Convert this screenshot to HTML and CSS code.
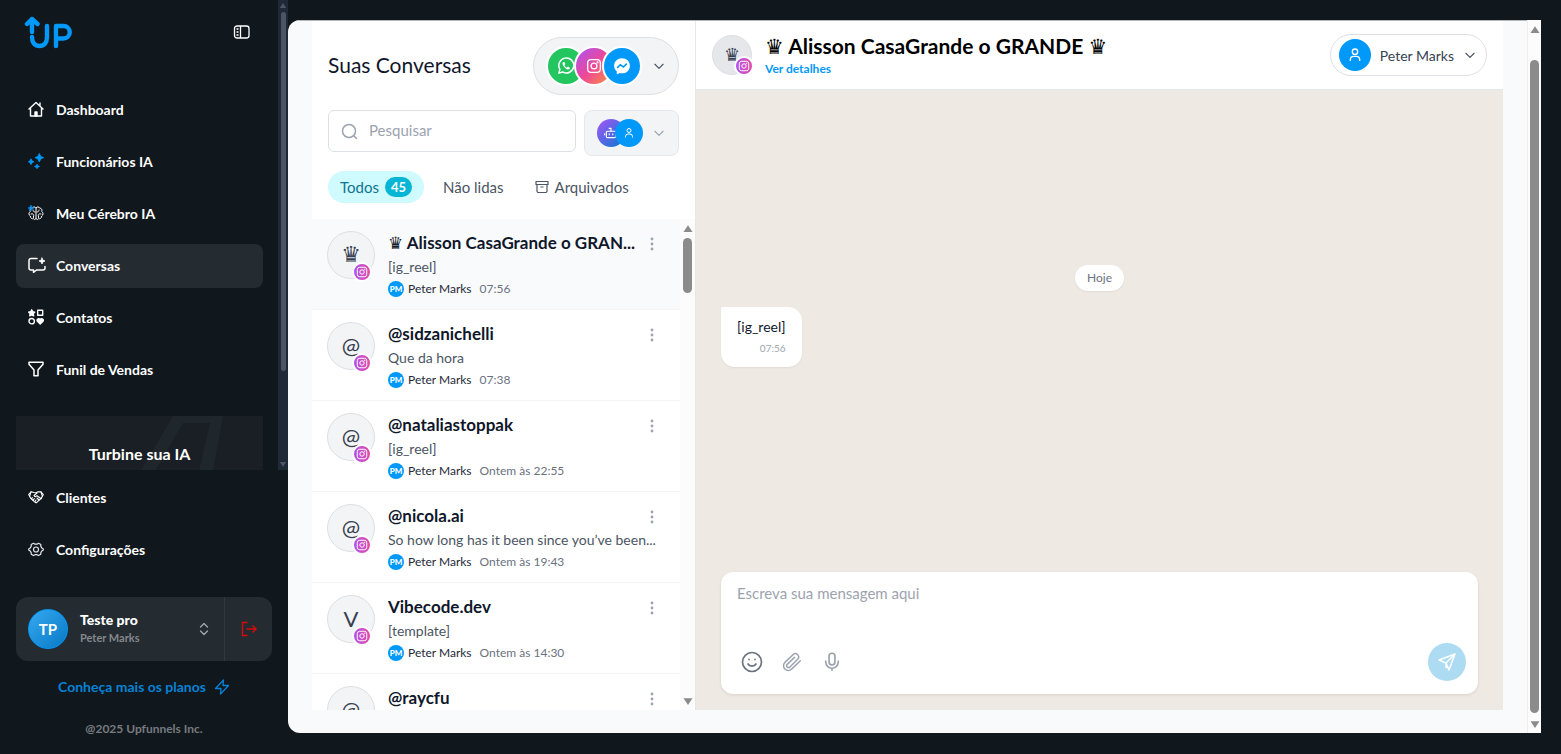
FILE: index.html
```html
<!DOCTYPE html>
<html lang="pt-BR">
<head>
  <meta charset="UTF-8">
  <meta name="viewport" content="width=device-width, initial-scale=1">
  <title>Conversas | UP</title>
  <link rel="stylesheet" href="styles.css">
</head>
<body>

  <!-- Shared icons -->
  <svg class="sprite" aria-hidden="true">
    <symbol id="instagram" viewBox="0 0 24 24">
      <rect x="2.5" y="2.5" width="19" height="19" rx="5"/>
      <circle cx="12" cy="12" r="4.4"/>
      <circle cx="17.3" cy="6.7" r=".7"/>
    </symbol>
    <symbol id="person" viewBox="0 0 24 24">
      <circle cx="12" cy="7" r="4"/>
      <path d="M5 21v-2a5 5 0 0 1 5-5h4a5 5 0 0 1 5 5v2"/>
    </symbol>
    <symbol id="chevron" viewBox="0 0 24 24"><path d="M5 9l7 7 7-7"/></symbol>
    <symbol id="dots" viewBox="0 0 4 14">
      <circle cx="2" cy="2" r="1.4"/><circle cx="2" cy="7" r="1.4"/><circle cx="2" cy="12" r="1.4"/>
    </symbol>
    <symbol id="up" viewBox="0 0 10 8"><path d="M5 1l4 6H1z"/></symbol>
    <symbol id="down" viewBox="0 0 10 8"><path d="M5 7L1 1h8z"/></symbol>
  </svg>

  <aside class="sidebar">
    <div class="sidebar-top">
      <div class="sidebar-scroll">
        <header class="brand">
          <a href="#" class="logo" aria-label="UP">
            <svg viewBox="0 0 48 34" width="48" height="34" fill="none" stroke="#0099fa" stroke-width="4.4" stroke-linecap="round" stroke-linejoin="round">
              <path d="M8 17V4M3 9L8 4l5.500 5"/>
              <path d="M8 22c0 6 3 9 7.500 9S23 28 23 22V11"/>
              <path d="M32 31V11h7.500a6 6 0 0 1 0 12.500H32"/>
            </svg>
          </a>
          <button class="icon-button" aria-label="Recolher menu">
            <svg viewBox="0 0 18 14" width="18" height="14" fill="none" stroke="#fff" stroke-width="1.300">
              <rect x="1.500" y="1" width="14.500" height="12" rx="2.500"/>
              <path d="M7.500 1v12M3.500 4h2M3.500 7h2M3.500 10h2"/>
            </svg>
          </button>
        </header>

        <nav class="menu">
          <a href="#" class="menu-item">
            <svg viewBox="0 0 16 16" fill="none" stroke="#fff" stroke-width="1.400" stroke-linecap="round" stroke-linejoin="round">
              <path d="M1 8l7-6.500L15 8M2.500 7v8h11V7M12 4.500V2"/>
              <path d="M7 15v-4h2v4z" fill="#fff"/>
            </svg>
            Dashboard
          </a>
          <a href="#" class="menu-item">
            <svg viewBox="0 0 16 16" fill="#0099fa" stroke="#0099fa" stroke-width=".8" stroke-linejoin="round">
              <path d="M11.300 .4l1.500 3 2.800 1.200-2.800 1.400-1.500 3L9.900 6 7 4.600l2.900-1.200zM3 5.800l1 2 1.900.9-1.900 1L3 11.600l-1-1.900-1.600-1 1.600-.9zM9 11.200l.8 1.500 1.600.8-1.600.8L9 15.700l-.8-1.400-1.600-.8 1.600-.8z"/>
            </svg>
            Funcionários IA
          </a>
          <a href="#" class="menu-item">
            <svg viewBox="0 0 16 16" fill="none" stroke="#fff" stroke-width="1" stroke-linecap="round">
              <path d="M8 3C7 1.500 5 1.500 4.500 3 2.500 3 1.500 5 2.300 6.500.5 7.500.5 10 2.300 11c0 2 1.700 3.200 3.200 2.700C6.300 15 7.500 14.500 8 13.500c.5 1 1.700 1.500 2.500.2 1.500.5 3.200-.7 3.200-2.700 1.800-1 1.800-3.500 0-4.500C14.500 5 13.500 3 11.500 3 11 1.500 9 1.500 8 3v10.500"/>
              <path d="M5 5c0 1.500 1 2 2 2M3 9c1.500-.6 2.500 0 2.800 1.200M11 5c0 1.500-1 2-2 2M13 9c-1.500-.6-2.500 0-2.800 1.200M5.500 12.500V11M10.500 12.500V11"/>
              <path d="M3 0l.9 2.100L6 3l-2.100.9L3 6l-.9-2.100L0 3l2.100-.9z" fill="#0099fa" stroke="#0099fa" stroke-width=".5"/>
            </svg>
            Meu Cérebro IA
          </a>
          <a href="#" class="menu-item active">
            <svg viewBox="0 0 18 16" class="wide" fill="none" stroke="#fff" stroke-width="1.500" stroke-linecap="round" stroke-linejoin="round">
              <path d="M9 1.500H3a2 2 0 0 0-2 2V11a2 2 0 0 0 2 2h2.500v2.300L8.500 13H15a2 2 0 0 0 2-2V9.500"/>
              <path d="M14 1l.9 2.100 2.100.9-2.100.9L14 7l-.9-2.100L11 4l2.100-.9z" fill="#fff" stroke-width=".8"/>
            </svg>
            Conversas
          </a>
          <a href="#" class="menu-item">
            <svg viewBox="0 0 16 16" fill="none" stroke="#fff" stroke-width="1.400" stroke-linejoin="round">
              <path d="M3.700.8l1 2 2.100.3-1.500 1.500.3 2.200-1.900-1-1.900 1 .3-2.200L.6 3.100l2.100-.3z" fill="#fff"/>
              <path d="M9.700 1.200h5v5h-5z"/>
              <circle cx="3.700" cy="12.200" r="2.700"/>
              <path d="M12.200 15L9.400 12.200c-1.200-1.700 1.300-3.600 2.800-1.700 1.500-1.900 4 0 2.800 1.700z" fill="#fff"/>
            </svg>
            Contatos
          </a>
          <a href="#" class="menu-item">
            <svg viewBox="0 0 16 16" fill="none" stroke="#fff" stroke-width="1.500" stroke-linejoin="round">
              <path d="M1 1.300h14v1.900L10 9v5.700H6V9L1 3.200z"/>
            </svg>
            Funil de Vendas
          </a>
        </nav>

        <div class="boost">
          <svg class="boost-mark" viewBox="0 0 82 55" width="82" height="55" fill="#1f262c">
            <path d="M32 0h50L72 55H58L69 7H42L14 55H0z"/>
          </svg>
          <strong>Turbine sua IA</strong>
        </div>
      </div>

      <div class="scrollbar scrollbar-dark">
        <svg viewBox="0 0 10 8"><use href="#up"/></svg>
        <div class="track"><div class="thumb"></div></div>
        <svg viewBox="0 0 10 8"><use href="#down"/></svg>
      </div>
    </div>

    <div class="sidebar-bottom">
      <nav class="menu">
        <a href="#" class="menu-item">
          <svg viewBox="0 0 16 16" fill="none" stroke="#fff" stroke-width="1.100" stroke-linecap="round" stroke-linejoin="round">
            <path d="M.7 5.500L3 2.800l3 .7 2 .2 2-.9 3 .1 2.300 2.600L13.500 9 9 13.200c-.8.6-1.500.5-2 0L2.500 9z"/>
            <path d="M9 4L6 6.500c.5 1.500 2 1.300 3 .2l4.300 3M3 2.800L1.700 7M13 3l1.300 4M4.300 8.500L3.500 10M6.300 9.500L5 11.500M8 11l-1 1.500M9 9l2 2"/>
          </svg>
          Clientes
        </a>
        <a href="#" class="menu-item">
          <svg viewBox="0 0 16 16" fill="none" stroke="#e5e7eb" stroke-width="1.200" stroke-linejoin="round">
            <path d="M5.500 2.300L7 3.200h2l1.500-.9 2.300 1.300v1.800l1 1.500 1.500 1v1.200l-1.500.9-1 1.600v1.700l-2.300 1.300L9 13.700H7l-1.500.9-2.300-1.300v-1.700l-1-1.600-1.500-.9V7.900l1.500-1 1-1.500V3.600z"/>
            <circle cx="8" cy="8.500" r="2.500"/>
          </svg>
          Configurações
        </a>
      </nav>

      <div class="account">
        <button class="account-main">
          <span class="account-avatar">TP</span>
          <span class="account-text">
            <strong>Teste pro</strong>
            <small>Peter Marks</small>
          </span>
          <svg viewBox="0 0 10 14" width="10" height="14" fill="none" stroke="#a3a8ad" stroke-width="1.300" stroke-linecap="round" stroke-linejoin="round">
            <path d="M1.500 5L5 1.500 8.500 5M1.500 9L5 12.500 8.500 9"/>
          </svg>
        </button>
        <button class="logout" aria-label="Sair">
          <svg viewBox="0 0 16 16" width="16" height="16" fill="none" stroke="#d90b0b" stroke-width="1.400">
            <path d="M6.500 1.500h-5v13h5M5.500 8H15M11.500 4.500L15 8l-3.500 3.500"/>
          </svg>
        </button>
      </div>

      <a href="#" class="plans">
        Conheça mais os planos
        <svg viewBox="0 0 16 16" width="16" height="16" fill="none" stroke="#0683d6" stroke-width="1.300" stroke-linejoin="round">
          <path d="M9.500 1L1.500 9.500H7L6.500 15l8-8.500H9z"/>
        </svg>
      </a>
      <p class="copyright">@2025 Upfunnels Inc.</p>
    </div>
  </aside>

  <main class="main">
    <div class="workspace">

      <!-- Conversation list -->
      <section class="inbox">
        <div class="inbox-head">
          <div class="inbox-row">
            <h1>Suas Conversas</h1>
            <button class="channels" aria-label="Canais">
              <span class="bubbles">
                <span class="channel whatsapp">
                  <svg viewBox="0 0 24 24" width="18" height="18" fill="none" stroke="#fff" stroke-width="2" stroke-linejoin="round">
                    <path d="M2.500 21.500l1.400-5A10 10 0 1 1 7.500 20z"/>
                    <path d="M8.500 6.500c-2 1-1.500 4 1.300 7s6 4.200 7.500 1.800l-.4-1.300-2.400-1.200-1.300 1.300c-1.500-.5-2.500-1.500-3.200-3L11 9.700 10 6.800z" fill="#fff" stroke="none"/>
                  </svg>
                </span>
                <span class="channel instagram">
                  <svg width="16" height="16" fill="none" stroke="#fff" stroke-width="2"><use href="#instagram"/></svg>
                </span>
                <span class="channel messenger">
                  <svg viewBox="0 0 24 24" width="18" height="18" fill="#fff">
                    <path d="M12 1.500C6 1.500 1.500 5.800 1.500 11.500c0 3.200 1.300 5.800 3.500 7.600v3.200c0 .6.500.8 1 .6l2.800-1.500c1 .3 2 .4 3.200.4 6 0 10.500-4.500 10.500-10.300S18 1.500 12 1.500z"/>
                    <path d="M5.500 14.500l4.300-4.200 4 3 4.700-4.500" fill="none" stroke="#0099fa" stroke-width="2.200"/>
                  </svg>
                </span>
              </span>
              <svg class="chevron" width="14" height="14"><use href="#chevron"/></svg>
            </button>
          </div>

          <div class="inbox-row search-row">
            <label class="search">
              <svg viewBox="0 0 18 18" width="18" height="18" fill="none" stroke="#9ca3af" stroke-width="1.500" stroke-linecap="round">
                <circle cx="8" cy="9" r="6.500"/><path d="M13 14l2.500 2.500"/>
              </svg>
              <input type="search" placeholder="Pesquisar" aria-label="Pesquisar">
            </label>
            <button class="agents" aria-label="Atendentes">
              <span class="bubbles">
                <span class="agent bot">
                  <svg viewBox="0 0 24 24" width="14" height="14" fill="none" stroke="#fff" stroke-width="2" stroke-linejoin="round">
                    <rect x="4" y="9" width="16" height="11" rx="2"/><path d="M1 13v3M23 13v3M12 9V4H8M9 13v3M15 13v3"/>
                  </svg>
                </span>
                <span class="agent human">
                  <svg width="12" height="12" fill="none" stroke="#fff" stroke-width="2"><use href="#person"/></svg>
                </span>
              </span>
              <svg class="chevron light" width="14" height="14"><use href="#chevron"/></svg>
            </button>
          </div>

          <div class="tabs">
            <button class="tab selected">Todos <span class="count">45</span></button>
            <button class="tab">Não lidas</button>
            <button class="tab">
              <svg viewBox="0 0 14 14" width="14" height="14" fill="none" stroke="#4b5563" stroke-width="1.200" stroke-linejoin="round">
                <path d="M1 1.500h12v3H1zM2 4.500v6.500a1.500 1.500 0 0 0 1.500 1.500h7A1.500 1.500 0 0 0 12 11V4.500M5.500 7h3"/>
              </svg>
              Arquivados
            </button>
          </div>
        </div>

        <div class="inbox-body">
          <ul class="threads">
            <li class="thread current">
              <div class="avatar"><span class="crown">♛</span>
                <span class="badge"><svg width="12" height="12"><use href="#instagram"/></svg></span>
              </div>
              <div class="thread-text">
                <h2><span class="crown">♛</span> Alisson CasaGrande o GRAN...</h2>
                <p>[ig_reel]</p>
                <div class="meta"><span class="pm">PM</span><span>Peter Marks</span><time>07:56</time></div>
              </div>
              <button class="more" aria-label="Opções"><svg width="4" height="14"><use href="#dots"/></svg></button>
            </li>
            <li class="thread">
              <div class="avatar">@
                <span class="badge"><svg width="12" height="12"><use href="#instagram"/></svg></span>
              </div>
              <div class="thread-text">
                <h2>@sidzanichelli</h2>
                <p>Que da hora</p>
                <div class="meta"><span class="pm">PM</span><span>Peter Marks</span><time>07:38</time></div>
              </div>
              <button class="more" aria-label="Opções"><svg width="4" height="14"><use href="#dots"/></svg></button>
            </li>
            <li class="thread">
              <div class="avatar">@
                <span class="badge"><svg width="12" height="12"><use href="#instagram"/></svg></span>
              </div>
              <div class="thread-text">
                <h2>@nataliastoppak</h2>
                <p>[ig_reel]</p>
                <div class="meta"><span class="pm">PM</span><span>Peter Marks</span><time>Ontem às 22:55</time></div>
              </div>
              <button class="more" aria-label="Opções"><svg width="4" height="14"><use href="#dots"/></svg></button>
            </li>
            <li class="thread">
              <div class="avatar">@
                <span class="badge"><svg width="12" height="12"><use href="#instagram"/></svg></span>
              </div>
              <div class="thread-text">
                <h2>@nicola.ai</h2>
                <p>So how long has it been since you’ve been...</p>
                <div class="meta"><span class="pm">PM</span><span>Peter Marks</span><time>Ontem às 19:43</time></div>
              </div>
              <button class="more" aria-label="Opções"><svg width="4" height="14"><use href="#dots"/></svg></button>
            </li>
            <li class="thread">
              <div class="avatar">V
                <span class="badge"><svg width="12" height="12"><use href="#instagram"/></svg></span>
              </div>
              <div class="thread-text">
                <h2>Vibecode.dev</h2>
                <p>[template]</p>
                <div class="meta"><span class="pm">PM</span><span>Peter Marks</span><time>Ontem às 14:30</time></div>
              </div>
              <button class="more" aria-label="Opções"><svg width="4" height="14"><use href="#dots"/></svg></button>
            </li>
            <li class="thread">
              <div class="avatar">@</div>
              <div class="thread-text">
                <h2>@raycfu</h2>
              </div>
              <button class="more" aria-label="Opções"><svg width="4" height="14"><use href="#dots"/></svg></button>
            </li>
          </ul>
          <div class="scrollbar scrollbar-list">
            <svg viewBox="0 0 10 8"><use href="#up"/></svg>
            <div class="track"><div class="thumb"></div></div>
            <svg viewBox="0 0 10 8"><use href="#down"/></svg>
          </div>
        </div>
      </section>

      <!-- Open conversation -->
      <section class="chat">
        <header class="chat-head">
          <div class="avatar small"><span class="crown">♛</span>
            <span class="badge"><svg width="12" height="12"><use href="#instagram"/></svg></span>
          </div>
          <div class="chat-title">
            <h2><span class="crown">♛</span> Alisson CasaGrande o GRANDE <span class="crown">♛</span></h2>
            <a href="#">Ver detalhes</a>
          </div>
          <button class="assignee">
            <span class="assignee-icon">
              <svg width="16" height="16" fill="none" stroke="#fff" stroke-width="2"><use href="#person"/></svg>
            </span>
            Peter Marks
            <svg class="chevron" width="14" height="14"><use href="#chevron"/></svg>
          </button>
        </header>

        <div class="messages">
          <span class="day">Hoje</span>
          <div class="message">
            <p>[ig_reel]</p>
            <time>07:56</time>
          </div>
        </div>

        <form class="composer">
          <textarea placeholder="Escreva sua mensagem aqui" aria-label="Mensagem" rows="2"></textarea>
          <div class="composer-actions">
            <button type="button" class="icon-button dark" aria-label="Emoji">
              <svg viewBox="0 0 24 24" width="24" height="24" fill="none" stroke="currentColor" stroke-width="1.700" stroke-linecap="round">
                <circle cx="12" cy="12" r="9.500"/><path d="M8 14c1.500 2.700 6.500 2.700 8 0M9 9.300v.2M15 9.300v.2"/>
              </svg>
            </button>
            <button type="button" class="icon-button" aria-label="Anexar">
              <svg viewBox="0 0 24 24" width="20" height="20" fill="none" stroke="currentColor" stroke-width="1.800" stroke-linecap="round" stroke-linejoin="round">
                <path d="M22 10.500L11.500 20.500a5.500 5.500 0 0 1-8-8L13.500 3a3.900 3.900 0 0 1 5.500 5.500L9.500 18a2.200 2.200 0 0 1-3.200-3.200L15 6.500"/>
              </svg>
            </button>
            <button type="button" class="icon-button" aria-label="Gravar áudio">
              <svg viewBox="0 0 24 24" width="20" height="20" fill="none" stroke="currentColor" stroke-width="2" stroke-linecap="round">
                <rect x="8.500" y="1.500" width="7" height="14" rx="3.500"/><path d="M4.500 11v1a7.500 7.500 0 0 0 15 0v-1M12 19.500V22"/>
              </svg>
            </button>
            <button class="send" aria-label="Enviar">
              <svg viewBox="0 0 20 20" width="20" height="20" fill="none" stroke="#fff" stroke-width="1.500" stroke-linejoin="round">
                <path d="M18 2L2 8l7 3 3 7zM9 11l9-9M9 11v4.500l2-1.500"/>
              </svg>
            </button>
          </div>
        </form>
      </section>
    </div>

    <div class="scrollbar scrollbar-page">
      <svg viewBox="0 0 10 8"><use href="#up"/></svg>
      <div class="track"><div class="thumb"></div></div>
      <svg viewBox="0 0 10 8"><use href="#down"/></svg>
    </div>
  </main>

</body>
</html>
```
FILE: styles.css
```css
* {
  box-sizing: border-box;
}

body {
  display: flex;
  height: 100vh;
  margin: 0;
  overflow: hidden;
  background: #10171d;
  color: #0f172a;
  font-family: Lato, "DejaVu Sans", sans-serif;
  font-size: 15px;
}

h1, h2, p, ul {
  margin: 0;
  padding: 0;
}

a {
  color: inherit;
  text-decoration: none;
}

button, input, textarea {
  padding: 0;
  border: none;
  background: none;
  color: inherit;
  font: inherit;
}

button {
  cursor: pointer;
}

svg {
  display: block;
  flex-shrink: 0;
}

.sprite {
  position: absolute;
  width: 0;
  height: 0;
}

/* Sidebar */
.sidebar {
  display: flex;
  flex-direction: column;
  flex-shrink: 0;
  width: 288px;
  color: #fff;
}

.sidebar-top {
  display: flex;
  flex: 1;
  min-height: 0;
}

.sidebar-scroll {
  flex: 1;
  padding: 0 15px 0 16px;
  overflow: hidden;
}

.brand {
  display: flex;
  align-items: center;
  justify-content: space-between;
  height: 64px;
  margin-bottom: 24px;
  padding: 0 9px 0 8px;
}

.menu {
  display: flex;
  flex-direction: column;
  gap: 8px;
}

.menu-item {
  display: flex;
  align-items: center;
  gap: 12px;
  height: 44px;
  padding: 0 12px 2px;
  border-radius: 8px;
  font-size: 14px;
  font-weight: 700;
}

.menu-item svg {
  width: 16px;
  height: 16px;
}

.menu-item .wide {
  width: 18px;
  margin-right: -2px;
}

.menu-item.active {
  background: #242b31;
}

.boost {
  position: relative;
  height: 96px;
  margin-top: 24px;
  padding-top: 28px;
  background: #191f25;
  font-size: 16px;
  line-height: 20px;
  text-align: center;
}

.boost-mark {
  position: absolute;
  top: 0;
  right: 40px;
}

.boost strong {
  position: relative;
}

.sidebar-bottom {
  display: flex;
  flex-direction: column;
  padding: 6px 16px 17px;
}

.account {
  display: flex;
  height: 64px;
  margin-top: 25px;
  border-radius: 12px;
  background: #242b31;
}

.account-main {
  display: flex;
  flex: 1;
  align-items: center;
  gap: 12px;
  padding: 0 15px 0 12px;
  text-align: left;
}

.account-avatar {
  display: flex;
  align-items: center;
  justify-content: center;
  width: 40px;
  height: 40px;
  border: 1px solid #0099fa;
  border-radius: 50%;
  background: linear-gradient(135deg, #36a9f2, #0878c4);
  font-weight: 700;
}

.account-text {
  display: flex;
  flex: 1;
  flex-direction: column;
  line-height: 18px;
}

.account-text strong {
  font-size: 14px;
  font-weight: 900;
}

.account-text small {
  color: #84888c;
  font-size: 11px;
  font-weight: 700;
}

.logout {
  display: flex;
  align-items: center;
  justify-content: center;
  width: 48px;
  border-left: 1px solid #31383e;
}

.plans {
  display: flex;
  align-items: center;
  justify-content: center;
  gap: 8px;
  margin-top: 16px;
  color: #0683d6;
  font-size: 14px;
  font-weight: 700;
  line-height: 20px;
}

.copyright {
  margin-top: 24px;
  color: #777b7f;
  font-size: 12px;
  font-weight: 700;
  line-height: 16px;
  text-align: center;
}

/* Scrollbars */
.scrollbar {
  display: flex;
  flex-direction: column;
  flex-shrink: 0;
  align-items: center;
  width: 14px;
  padding: 5px 0 4px;
  background: #fcfcfc;
}

.scrollbar svg {
  width: 12px;
  height: 9px;
  fill: #8b8b8b;
}

.track {
  flex: 1;
  width: 9px;
  padding-top: 5px;
}

.thumb {
  border-radius: 5px;
  background: #8b8b8b;
}

.scrollbar-dark {
  width: 10px;
  padding: 2px 0;
  background: #1f2937;
}

.scrollbar-dark svg {
  width: 8px;
  height: 7px;
  fill: #4b5563;
}

.scrollbar-dark .track {
  width: 5px;
  padding-top: 3px;
}

.scrollbar-dark .thumb {
  height: 80%;
  background: #4b5563;
}

.scrollbar-list .thumb {
  height: 55px;
}

.scrollbar-page {
  border-left: 1px solid #efeee8;
}

.scrollbar-page .track {
  padding-top: 26px;
}

.scrollbar-page .thumb {
  height: 99%;
}

/* Main area */
.main {
  display: flex;
  flex: 1;
  min-width: 0;
  margin: 20px 20px 21px 0;
  overflow: hidden;
  border-radius: 12px 0 0 12px;
  background: #f9fafb;
}

.workspace {
  display: flex;
  flex: 1;
  min-width: 0;
  padding: 0 24px 23px;
  border-top: 1px solid #b5b8bb;
}

/* Inbox */
.inbox {
  display: flex;
  flex-direction: column;
  flex-shrink: 0;
  width: 384px;
  border-right: 1px solid #e5e7eb;
  background: #fff;
}

.inbox-head {
  display: flex;
  flex-direction: column;
  gap: 15px;
  padding: 16px;
}

.inbox-row {
  display: flex;
  align-items: center;
  justify-content: space-between;
  gap: 8px;
}

.inbox-row h1 {
  padding-bottom: 4px;
  font-size: 21px;
  font-weight: 400;
}

.search-row {
  align-items: flex-start;
}

.channels {
  display: flex;
  align-items: center;
  gap: 10px;
  height: 58px;
  padding: 0 12px;
  border: 1px solid #dcdfe4;
  border-radius: 29px;
  background: #f3f4f6;
}

.bubbles {
  display: flex;
}

.channel {
  display: flex;
  align-items: center;
  justify-content: center;
  width: 40px;
  height: 40px;
  margin-left: -12px;
  border: 2px solid #fff;
  border-radius: 50%;
}

.channel:first-child {
  margin-left: 0;
}

.whatsapp {
  background: #22c55e;
}

.instagram {
  background: linear-gradient(135deg, #a855f7, #ec4899 50%, #fb923c);
}

.messenger,
.human {
  background: #0099fa;
}

.chevron {
  fill: none;
  stroke: #4b5563;
  stroke-width: 2;
  stroke-linecap: round;
  stroke-linejoin: round;
}

.chevron.light {
  stroke: #9ca3af;
}

.search {
  display: flex;
  flex: 1;
  align-items: center;
  gap: 10px;
  min-width: 0;
  height: 42px;
  padding: 0 12px;
  border: 1px solid #dcdfe4;
  border-radius: 6px;
}

.search input {
  width: 100%;
  min-width: 0;
  padding-bottom: 2px;
  outline: none;
}

.search input::placeholder,
.composer textarea::placeholder {
  color: #9ca3af;
  opacity: 1;
}

.agents {
  display: flex;
  align-items: center;
  gap: 9px;
  height: 46px;
  padding: 0 12px;
  border: 1px solid #e5e7eb;
  border-radius: 8px;
  background: #f3f4f6;
}

.agent {
  display: flex;
  align-items: center;
  justify-content: center;
  width: 28px;
  height: 28px;
  border-radius: 50%;
}

.bot {
  background: linear-gradient(135deg, #a855f7, #0878d0);
}

.human {
  margin-left: -10px;
}

.tabs {
  display: flex;
  gap: 7px;
}

.tab {
  display: flex;
  align-items: center;
  gap: 6px;
  height: 32px;
  padding: 0 12px 1px;
  border-radius: 16px;
  color: #4b5563;
}

.tab.selected {
  background: #cffafe;
  color: #0e7490;
}

.count {
  padding: 0 6px;
  border-radius: 10px;
  background: #06b6d4;
  color: #fff;
  font-size: 13px;
  font-weight: 700;
  line-height: 20px;
}

.inbox-body {
  display: flex;
  flex: 1;
  min-height: 0;
}

.scrollbar-list {
  width: 15px;
}

.threads {
  flex: 1;
  min-width: 0;
  overflow: hidden;
  list-style: none;
}

.thread {
  display: flex;
  align-items: flex-start;
  height: 91px;
  padding: 12px 16px 10px 15px;
  border-bottom: 1px solid #f3f4f6;
}

.thread.current {
  background: #f9fafb;
}

.avatar {
  position: relative;
  display: flex;
  flex-shrink: 0;
  align-items: center;
  justify-content: center;
  width: 48px;
  height: 48px;
  margin-right: 13px;
  border: 1px solid #dcdfe4;
  border-radius: 50%;
  background: #f3f4f6;
  color: #374151;
  font-size: 22px;
  line-height: 24px;
}

.avatar.small {
  width: 40px;
  height: 40px;
  background: #e5e7eb;
  font-size: 18px;
}

.crown {
  font-family: "DejaVu Sans", sans-serif;
  font-weight: 700;
}

.badge {
  position: absolute;
  right: 2px;
  bottom: -4px;
  padding: 2px;
  border: 2px solid #fff;
  border-radius: 50%;
  background: linear-gradient(90deg, #a855f7, #ec4899) border-box;
}

.small .badge {
  right: -3px;
  bottom: -2px;
}

.badge svg {
  fill: none;
  stroke: #fff;
  stroke-width: 2;
}

.thread-text {
  flex: 1;
  min-width: 0;
}

.thread h2 {
  font-size: 17px;
  font-weight: 700;
  line-height: 24px;
  white-space: nowrap;
}

.thread p {
  color: #4b5563;
  font-size: 14px;
  line-height: 24px;
  white-space: nowrap;
}

.meta {
  display: flex;
  align-items: center;
  gap: 4px;
  color: #1f2937;
  font-size: 12px;
  line-height: 20px;
}

.meta time {
  margin-left: 4px;
  color: #6b7280;
}

.pm {
  width: 16px;
  height: 16px;
  border-radius: 50%;
  background: #0099fa;
  color: #fff;
  font-size: 8px;
  font-weight: 900;
  line-height: 16px;
  text-align: center;
}

.more {
  padding: 6px 5px;
  margin-right: 5px;
}

.more svg {
  fill: #9ca3af;
}

/* Chat */
.chat {
  display: flex;
  flex: 1;
  flex-direction: column;
  min-width: 0;
  background: #eee9e2;
}

.chat-head {
  display: flex;
  align-items: center;
  height: 69px;
  padding: 0 16px;
  border-bottom: 1px solid #e5e7eb;
  background: #fff;
}

.chat-title {
  flex: 1;
}

.chat-title h2 {
  color: #000;
  font-size: 21px;
  font-weight: 700;
  line-height: 26px;
}

.chat-title a {
  display: block;
  color: #0099fa;
  font-size: 12px;
  font-weight: 700;
  line-height: 18px;
}

.assignee {
  display: flex;
  align-items: center;
  gap: 9px;
  height: 42px;
  padding: 0 9px 0 8px;
  border: 1px solid #dcdfe4;
  border-radius: 21px;
  color: #374151;
  font-size: 14px;
}

.assignee-icon {
  display: flex;
  align-items: center;
  justify-content: center;
  width: 32px;
  height: 32px;
  border-radius: 50%;
  background: #0099fa;
}

.messages {
  display: flex;
  flex: 1;
  flex-direction: column;
  align-items: flex-start;
  gap: 16px;
  padding: 175px 25px 0;
}

.day {
  align-self: center;
  padding: 0 12px;
  border-radius: 13px;
  background: #fff;
  box-shadow: 0 1px 2px rgba(0, 0, 0, 0.06);
  color: #6b7280;
  font-size: 12px;
  line-height: 26px;
}

.message {
  padding: 8px 16px 10px;
  border-radius: 2px 14px 14px 14px;
  background: #fff;
  box-shadow: 0 1px 2px rgba(0, 0, 0, 0.06);
  font-size: 14px;
  line-height: 24px;
  text-align: right;
}

.message time {
  display: block;
  color: #9ca3af;
  font-size: 10px;
  line-height: 18px;
}

.composer {
  margin: 0 25px 16px;
  padding: 8px 12px 13px 16px;
  border-radius: 12px;
  background: #fff;
  box-shadow: 0 1px 3px rgba(0, 0, 0, 0.1);
}

.composer textarea {
  display: block;
  width: 100%;
  height: 63px;
  padding: 3px 0;
  outline: none;
  line-height: 20px;
  resize: none;
}

.composer-actions {
  display: flex;
  align-items: center;
  gap: 15px;
}

.icon-button {
  display: flex;
  align-items: center;
  justify-content: center;
  width: 24px;
  height: 24px;
  color: #9ca3af;
}

.composer .icon-button {
  width: 25px;
}

.composer .icon-button.dark {
  margin-left: 2px;
  color: #6b7280;
}

.send {
  display: flex;
  align-items: center;
  justify-content: center;
  width: 38px;
  height: 38px;
  margin-left: auto;
  border-radius: 50%;
  background: #addcf2;
}
```
